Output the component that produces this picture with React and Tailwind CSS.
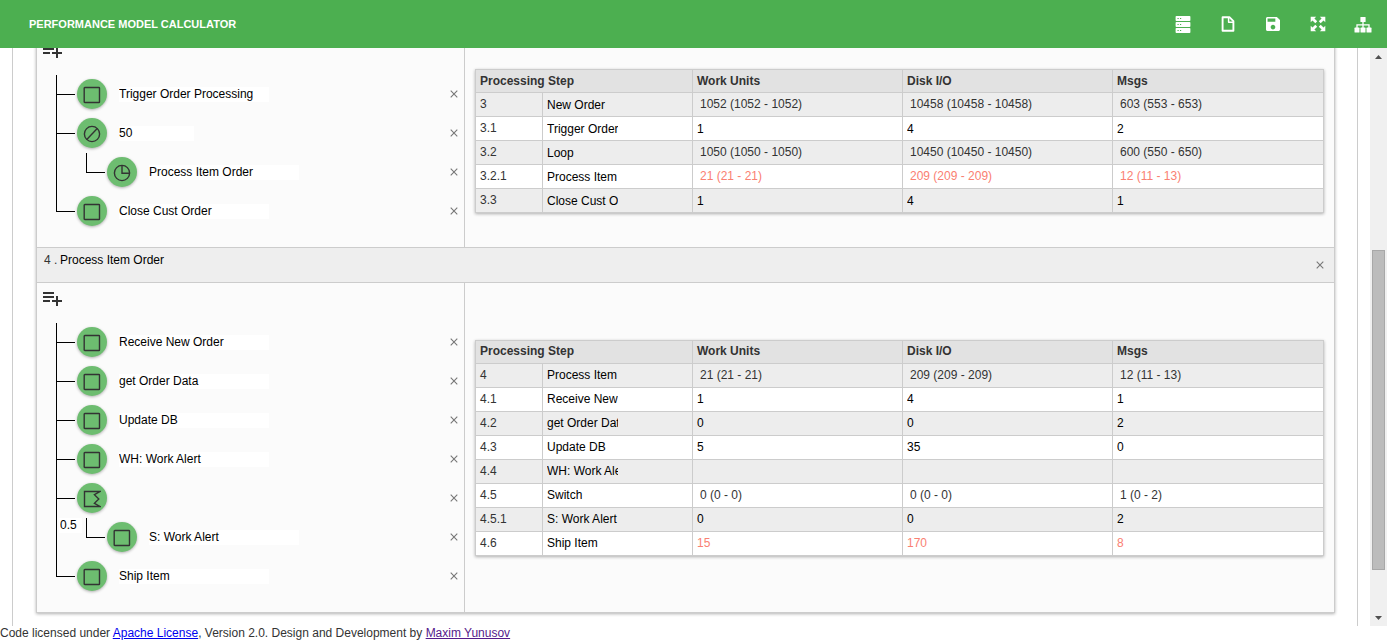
import React from "react";
import { MdPlaylistAdd } from "react-icons/md";

const sections = [
  {
    id: "3",
    steps: [
      { kind: "square", name: "Trigger Order Processing" },
      {
        kind: "loop",
        name: "50",
        narrow: true,
        children: [{ kind: "clock", name: "Process Item Order" }],
      },
      { kind: "square", name: "Close Cust Order" },
    ],
    rows: [
      { id: "3", name: "New Order", computed: true, values: ["1052 (1052 - 1052)", "10458 (10458 - 10458)", "603 (553 - 653)"] },
      { id: "3.1", name: "Trigger Order Processing", values: ["1", "4", "2"] },
      { id: "3.2", name: "Loop", computed: true, values: ["1050 (1050 - 1050)", "10450 (10450 - 10450)", "600 (550 - 650)"] },
      { id: "3.2.1", name: "Process Item", computed: true, alert: true, values: ["21 (21 - 21)", "209 (209 - 209)", "12 (11 - 13)"] },
      { id: "3.3", name: "Close Cust Order", values: ["1", "4", "1"] },
    ],
  },
  {
    id: "4",
    title: "Process Item Order",
    steps: [
      { kind: "square", name: "Receive New Order" },
      { kind: "square", name: "get Order Data" },
      { kind: "square", name: "Update DB" },
      { kind: "square", name: "WH: Work Alert" },
      {
        kind: "switch",
        children: [{ kind: "square", name: "S: Work Alert", chance: "0.5" }],
      },
      { kind: "square", name: "Ship Item" },
    ],
    rows: [
      { id: "4", name: "Process Item", computed: true, values: ["21 (21 - 21)", "209 (209 - 209)", "12 (11 - 13)"] },
      { id: "4.1", name: "Receive New Order", values: ["1", "4", "1"] },
      { id: "4.2", name: "get Order Data", values: ["0", "0", "2"] },
      { id: "4.3", name: "Update DB", values: ["5", "35", "0"] },
      { id: "4.4", name: "WH: Work Alert", values: ["", "", ""] },
      { id: "4.5", name: "Switch", computed: true, values: ["0 (0 - 0)", "0 (0 - 0)", "1 (0 - 2)"] },
      { id: "4.5.1", name: "S: Work Alert", values: ["0", "0", "2"] },
      { id: "4.6", name: "Ship Item", alert: true, values: ["15", "170", "8"] },
    ],
  },
];

const columns = ["Work Units", "Disk I/O", "Msgs"];

function StepIcon({ kind }) {
  return (
    <svg className="mt-px size-[18px]" viewBox="0 0 18 18" fill="none" stroke="#333" strokeWidth="1.4">
      {kind === "square" && <rect x="1.2" y="1.5" width="15.3" height="15" rx="0.6" />}
      {kind === "loop" && (
        <>
          <circle cx="9" cy="9" r="7.6" />
          <path d="M3.8 14.4 14.2 3.6" />
        </>
      )}
      {kind === "clock" && (
        <>
          <circle cx="9" cy="9" r="7.6" />
          <path d="M9 1.4V9.2h7.6" />
        </>
      )}
      {kind === "switch" && <path d="M17 1.5H1.5v15H17L11.4 13.3 15.8 9 11.4 4.7z" />}
    </svg>
  );
}

function Step({ step, last }) {
  return (
    <li className="relative flex">
      <div className={last ? "mr-px h-5 w-5 shrink-0" : "mr-px w-5 shrink-0 border-l border-black"}>
        <div className={last ? "h-5 w-[19px] border-b border-l border-black" : "h-5 w-[18px] border-b border-black"} />
      </div>
      {step.chance && (
        <input
          aria-label="Probability"
          defaultValue={step.chance}
          className="absolute -left-[27px] top-0 h-[15px] w-[23px] bg-white px-px text-black"
        />
      )}
      <div className="min-w-0 flex-1">
        <div className="flex h-[39px] items-center pb-px">
          <button
            aria-label="Edit step"
            className="flex size-[30px] shrink-0 items-center justify-center rounded-full bg-[#6dbd70] shadow-[0_1px_3px_rgba(0,0,0,0.3)]"
          >
            <StepIcon kind={step.kind} />
          </button>
          {step.name && (
            <input
              aria-label="Step name"
              defaultValue={step.name}
              className={(step.narrow ? "w-[75px]" : "w-[150px]") + " ml-3 mt-px h-[15px] bg-white text-black"}
            />
          )}
          <DeleteButton className="mb-px ml-auto" />
        </div>
        {step.children && <Steps steps={step.children} className="pl-[9px]" />}
      </div>
    </li>
  );
}

function Steps({ steps, className }) {
  return (
    <ul className={className}>
      {steps.map((step, i) => (
        <Step key={i} step={step} last={i === steps.length - 1} />
      ))}
    </ul>
  );
}

function DeleteButton({ className }) {
  return (
    <button aria-label="Delete" className={className + " flex h-4 w-2 items-center justify-center text-[#777]"}>
      <svg className="size-2" viewBox="0 0 8 8" fill="none" stroke="currentColor" strokeWidth="1.1">
        <path d="M.7.7l6.6 6.6M7.3.7.7 7.3" />
      </svg>
    </button>
  );
}

function Value({ row, value, label }) {
  if (row.computed) {
    return <span className={row.alert ? "pl-[3px] text-[#fa8072]" : "pl-[3px]"}>{value}</span>;
  }
  return (
    <input
      aria-label={label}
      defaultValue={value}
      className={(row.alert ? "text-[#fa8072]" : "text-black") + " mt-px block h-[15px] w-full bg-transparent"}
    />
  );
}

function StepTable({ rows }) {
  return (
    <table className="w-full table-fixed border-collapse bg-white shadow-[0_1px_3px_rgba(0,0,0,0.3)]">
      <colgroup>
        <col className="w-[67px]" />
        <col className="w-[150px]" />
        <col className="w-[210px]" />
        <col className="w-[210px]" />
        <col />
      </colgroup>
      <thead>
        <tr className="h-[23px] bg-[#e2e2e2] text-left">
          <th colSpan={2} className="border border-[#ccc] px-1 py-0 font-bold">Processing Step</th>
          {columns.map((c) => (
            <th key={c} className="border border-[#ccc] px-1 py-0 font-bold">{c}</th>
          ))}
        </tr>
      </thead>
      <tbody>
        {rows.map((row) => (
          <tr key={row.id} className="h-6 odd:bg-[#ededed]">
            <td className="border border-[#ccc] px-1 py-0">{row.id}</td>
            <td className="border border-[#ccc] px-1 py-0">
              <input aria-label="Step name" defaultValue={row.name} className="mt-px block h-[15px] w-[71px] bg-transparent text-black" />
            </td>
            {row.values.map((v, i) => (
              <td key={i} className="border border-[#ccc] px-1 py-0">
                <Value row={row} value={v} label={columns[i]} />
              </td>
            ))}
          </tr>
        ))}
      </tbody>
    </table>
  );
}

function Section({ section }) {
  return (
    <section>
      {section.title && (
        <header className="flex h-9 items-center justify-between border-y border-[#ccc] bg-[#eee] pl-[7px] pr-[10px]">
          <div className="mb-[10px] flex items-center">
            <span className="w-4">{section.id} .</span>
            <input aria-label="Section name" defaultValue={section.title} className="h-[15px] w-[150px] bg-transparent text-black" />
          </div>
          <DeleteButton className="" />
        </header>
      )}
      <div className="flex">
        <div className="w-[428px] shrink-0 border-r border-[#ccc] pb-4 pl-[19px] pr-[6px]">
          <div className="-ml-4 h-10 pt-[3px]">
            <button aria-label="Add step" className="block text-[#333]">
              <MdPlaylistAdd size={24} />
            </button>
          </div>
          <Steps steps={section.steps} />
        </div>
        <div className="flex min-w-0 flex-1 items-center px-[10px]">
          <StepTable rows={section.rows} />
        </div>
      </div>
    </section>
  );
}

function ServerIcon() {
  return (
    <svg className="h-[18px] w-4" viewBox="0 0 16 18">
      {[1, 7, 13].map((y) => (
        <g key={y}>
          <rect x="0.6" y={y} width="14.8" height="5" rx="0.8" fill="#fff" />
          <path d={`M2.5 ${y + 2.5}h1.2M5 ${y + 2.5}h1.2`} stroke="#4caf50" strokeWidth="1" />
        </g>
      ))}
    </svg>
  );
}

function FileIcon() {
  return (
    <svg className="size-4" viewBox="0 0 16 16" fill="none" stroke="#fff" strokeWidth="1.9" strokeLinejoin="round">
      <path d="M2.6 1.2h6.8l4 4v9.6H2.6z" />
      <path d="M8.6 1.4v4.8h4.6" strokeWidth="1.5" />
    </svg>
  );
}

function SaveIcon() {
  return (
    <svg className="size-[14px]" viewBox="3 3 18 18" fill="#fff">
      <path d="M17 3H5c-1.11 0-2 .9-2 2v14c0 1.1.89 2 2 2h14c1.1 0 2-.9 2-2V7l-4-4zm-5 16c-1.66 0-3-1.34-3-3s1.34-3 3-3 3 1.34 3 3-1.34 3-3 3zm3-10H5V5h10v4z" />
    </svg>
  );
}

function ExpandIcon() {
  return (
    <svg className="size-4" viewBox="0 0 16 16" fill="#fff">
      {[0, 90, 180, 270].map((a) => (
        <path key={a} transform={`rotate(${a} 8 8)`} d="M.7.7H6.2L4.4 2.5 7.2 5.3 5.3 7.2 2.5 4.4.7 6.2z" />
      ))}
    </svg>
  );
}

function SitemapIcon() {
  return (
    <svg className="mt-0.5 h-4 w-[18px]" viewBox="0 0 18 16" fill="#fff">
      <rect x="6.4" y="0" width="5.2" height="5" rx="0.6" />
      <rect x="0.5" y="10.6" width="5" height="4.9" rx="0.6" />
      <rect x="6.5" y="10.6" width="5" height="4.9" rx="0.6" />
      <rect x="12.5" y="10.6" width="5" height="4.9" rx="0.6" />
      <path d="M9 4.5v6.5M3 11V7.8h12V11" fill="none" stroke="#fff" strokeWidth="1.3" />
    </svg>
  );
}

const tools = [
  { label: "Servers", Icon: ServerIcon },
  { label: "New file", Icon: FileIcon },
  { label: "Save", Icon: SaveIcon },
  { label: "Full screen", Icon: ExpandIcon },
  { label: "Structure", Icon: SitemapIcon },
];

function Header() {
  return (
    <header className="flex h-12 shrink-0 items-center justify-between bg-[#4caf50] pl-[29px] pr-[13px] text-white">
      <h1 className="text-[11px] font-bold">PERFORMANCE MODEL CALCULATOR</h1>
      <nav className="flex gap-[23px]">
        {tools.map(({ label, Icon }) => (
          <button key={label} aria-label={label} className="flex size-[22px] items-center justify-center">
            <Icon />
          </button>
        ))}
      </nav>
    </header>
  );
}

function ScrollBar() {
  return (
    <div className="flex w-[17px] shrink-0 flex-col items-center bg-[#f0f0f0]">
      <button aria-label="Scroll up" className="flex h-[17px] w-full items-center justify-center">
        <svg className="h-1 w-[7px]" viewBox="0 0 7 4" fill="#505050"><path d="M3.5 0 7 4H0z" /></svg>
      </button>
      <div className="grow-[186]" />
      <div className="w-[13px] grow-[319] border border-[#a8a8a8] bg-[#bcbcbc]" />
      <div className="grow-[39]" />
      <button aria-label="Scroll down" className="flex h-[17px] w-full items-center justify-center">
        <svg className="h-1 w-[7px]" viewBox="0 0 7 4" fill="#505050"><path d="M0 0h7L3.5 4z" /></svg>
      </button>
    </div>
  );
}

export default function App() {
  return (
    <div className="flex h-screen flex-col bg-white font-['Liberation_Sans',Arial,sans-serif] text-[12px] leading-[15px] text-[#333]">
      <Header />
      <div className="flex min-h-0 flex-1">
        <main className="min-w-0 flex-1 overflow-hidden px-3">
          <div className="-mt-[13px] border-x border-[#ccc] pb-8 pl-[23px] pr-[22px]">
            <div className="border border-t-0 border-[#ccc] bg-[#fbfbfb] shadow-[0_1px_3px_rgba(0,0,0,0.3)]">
              {sections.map((s) => (
                <Section key={s.id} section={s} />
              ))}
            </div>
          </div>
        </main>
        <ScrollBar />
      </div>
      <footer className="h-[15px] shrink-0">
        Code licensed under <a href="#license" className="text-[#0000ee] underline">Apache License</a>, Version 2.0. Design and
        Development by <a href="#author" className="text-[#551a8b] underline">Maxim Yunusov</a>
      </footer>
    </div>
  );
}
